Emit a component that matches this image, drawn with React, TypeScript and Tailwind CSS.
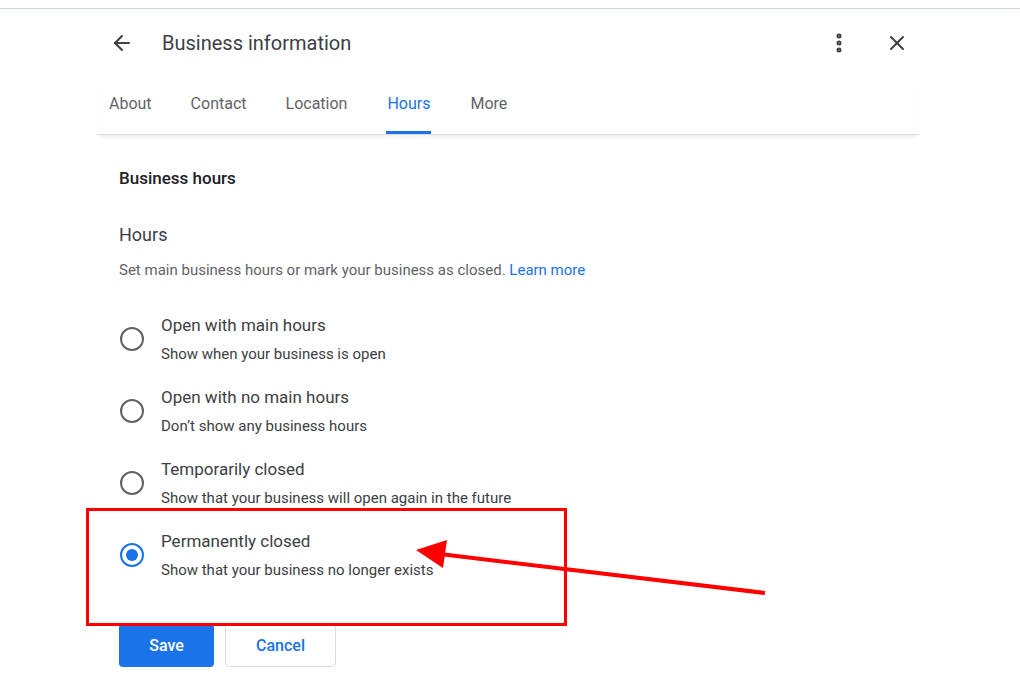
import { ArrowLeft, EllipsisVertical, X } from 'lucide-react'

const options = [
  { title: 'Open with main hours', sub: 'Show when your business is open' },
  { title: 'Open with no main hours', sub: 'Don’t show any business hours' },
  { title: 'Temporarily closed', sub: 'Show that your business will open again in the future' },
  { title: 'Permanently closed', sub: 'Show that your business no longer exists', checked: true },
]

function Radio({ checked }: { checked?: boolean }) {
  return (
    <div
      className={
        'w-[24px] h-[24px] rounded-full border-2 flex items-center justify-center shrink-0 ' +
        (checked ? 'border-[#1a73e8]' : 'border-[#5f6368]')
      }
    >
      {checked && <div className="w-[12px] h-[12px] rounded-full bg-[#1a73e8]" />}
    </div>
  )
}

export default function App() {
  return (
    <div className="relative w-[1020px] h-[684px] bg-white overflow-hidden font-[Roboto,sans-serif] text-[#202124]">
      <div className="h-[9px] border-b border-[#c6d9d4]" />
      <div className="mx-[97px] w-[822px]">
        {/* header */}
        <div className="flex items-center h-[68px] pl-[13px] pr-[10px]">
          <ArrowLeft className="w-[24px] h-[24px] text-[#3c4043]" strokeWidth={2} />
          <span className="ml-[28px] text-[20px] text-[#3c4043]">Business information</span>
          <div className="ml-auto flex items-center gap-[34px]">
            <EllipsisVertical className="w-[24px] h-[24px] text-[#3c4043]" strokeWidth={3} />
            <X className="w-[24px] h-[24px] text-[#3c4043]" strokeWidth={2} />
          </div>
        </div>
        {/* tabs */}
        <div className="flex gap-[39px] pl-[12px] h-[58px] items-end text-[16px] text-[#5f6368] border-b border-[#dadce0] shadow-[0_4px_4px_-2px_rgba(0,0,0,0.08)]">
          <span className="pb-[18px]">About</span>
          <span className="pb-[18px]">Contact</span>
          <span className="pb-[18px]">Location</span>
          <span className="pb-[15px] text-[#1a73e8] border-b-[3px] border-[#1a73e8] rounded-t-sm px-[1px]">Hours</span>
          <span className="pb-[18px]">More</span>
        </div>
        {/* content */}
        <div className="pl-[22px] pt-[31px]">
          <div className="text-[17px] font-medium leading-[24px]">Business hours</div>
          <div className="mt-[33px] text-[18px] text-[#3c4043] leading-[24px]">Hours</div>
          <div className="mt-[13px] text-[15px] text-[#5f6368] leading-[20px]">
            Set main business hours or mark your business as closed.{' '}
            <span className="text-[#1a73e8]">Learn more</span>
          </div>
          <div className="mt-[33px] flex flex-col gap-[21px]">
            {options.map((o) => (
              <div key={o.title} className="flex items-center gap-[17px] pl-[1px]">
                <Radio checked={o.checked} />
                <div>
                  <div className="text-[17px] text-[#3c4043] leading-[24px]">{o.title}</div>
                  <div className="text-[15px] text-[#3c4043] leading-[20px] mt-[7px]">{o.sub}</div>
                </div>
              </div>
            ))}
          </div>
          <div className="mt-[44px] flex gap-[11px]">
            <button className="w-[95px] h-[43px] rounded bg-[#1a73e8] text-white text-[16px] font-medium">Save</button>
            <button className="w-[111px] h-[43px] rounded border border-[#dadce0] text-[#1a73e8] text-[16px] font-medium">Cancel</button>
          </div>
        </div>
      </div>
      {/* annotation */}
      <div className="absolute left-[86px] top-[508px] w-[481px] h-[118px] border-[3px] border-[#ff0000]" />
      <svg className="absolute left-0 top-0" width="1020" height="684">
        <line x1="765" y1="593" x2="440" y2="554" stroke="#ff0000" strokeWidth="4" />
        <polygon points="416,550 447,540 443,568" fill="#ff0000" />
      </svg>
    </div>
  )
}
